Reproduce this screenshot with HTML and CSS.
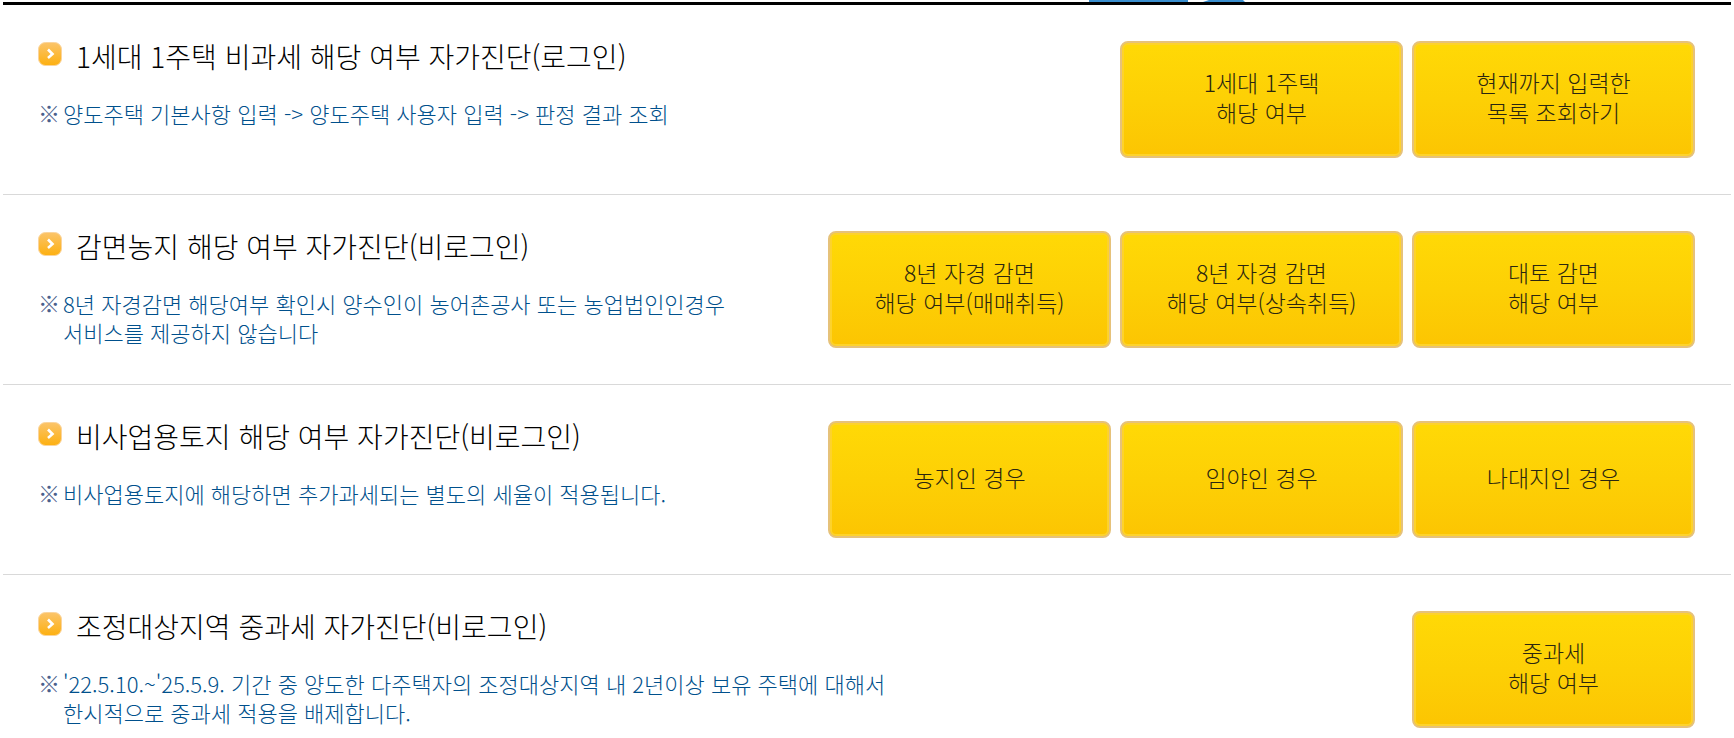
FILE: index.html
```
<!DOCTYPE html>
<html lang="ko">
  <head>
    <meta charset="utf-8" />
    <title>양도소득세 자가진단</title>
    <link rel="stylesheet" href="styles.css">
  </head>

  <body>
    <svg class="symbols" width="0" height="0" aria-hidden="true">
      <defs>
        <linearGradient id="bulletFill" x1="0" y1="0" x2="0" y2="1">
          <stop offset="0" stop-color="#fbc46a" />
          <stop offset="1" stop-color="#fdb010" />
        </linearGradient>
        <symbol id="bullet" viewBox="0 0 24 24">
          <rect x="0.5" y="0.5" width="23" height="23" rx="7" fill="url(#bulletFill)" stroke="#fbd49a" />
          <path d="M10 7.5l4.5 4.5-4.5 4" fill="none" stroke="#fff" stroke-width="2.6" />
        </symbol>
      </defs>
    </svg>

    <div class="topline">
      <svg class="banner" width="156" height="2" aria-hidden="true">
        <rect width="99" height="2" fill="#3a8fcf" />
        <path d="M114 2l6-2h34l2 2z" fill="#3a8fcf" />
      </svg>
    </div>

    <main class="list">
      <section class="row">
        <div class="info">
          <h2 class="title"><svg class="bullet"><use href="#bullet" /></svg>1세대 1주택 비과세 해당 여부 자가진단(로그인)</h2>
          <p class="note"><span class="mark">※</span><span>양도주택 기본사항 입력 -&gt; 양도주택 사용자 입력 -&gt; 판정 결과 조회</span></p>
        </div>
        <div class="buttons">
          <button type="button" class="btn">1세대 1주택<br />해당 여부</button>
          <button type="button" class="btn">현재까지 입력한<br />목록 조회하기</button>
        </div>
      </section>

      <section class="row">
        <div class="info">
          <h2 class="title"><svg class="bullet"><use href="#bullet" /></svg>감면농지 해당 여부 자가진단(비로그인)</h2>
          <p class="note"><span class="mark">※</span><span>8년 자경감면 해당여부 확인시 양수인이 농어촌공사 또는 농업법인인경우<br />서비스를 제공하지 않습니다</span></p>
        </div>
        <div class="buttons">
          <button type="button" class="btn">8년 자경 감면<br />해당 여부(매매취득)</button>
          <button type="button" class="btn">8년 자경 감면<br />해당 여부(상속취득)</button>
          <button type="button" class="btn">대토 감면<br />해당 여부</button>
        </div>
      </section>

      <section class="row">
        <div class="info">
          <h2 class="title"><svg class="bullet"><use href="#bullet" /></svg>비사업용토지 해당 여부 자가진단(비로그인)</h2>
          <p class="note"><span class="mark">※</span><span>비사업용토지에 해당하면 추가과세되는 별도의 세율이 적용됩니다.</span></p>
        </div>
        <div class="buttons">
          <button type="button" class="btn">농지인 경우</button>
          <button type="button" class="btn">임야인 경우</button>
          <button type="button" class="btn">나대지인 경우</button>
        </div>
      </section>

      <section class="row">
        <div class="info">
          <h2 class="title"><svg class="bullet"><use href="#bullet" /></svg>조정대상지역 중과세 자가진단(비로그인)</h2>
          <p class="note"><span class="mark">※</span><span>'22.5.10.~'25.5.9. 기간 중 양도한 다주택자의 조정대상지역 내 2년이상 보유 주택에 대해서<br />한시적으로 중과세 적용을 배제합니다.</span></p>
        </div>
        <div class="buttons">
          <button type="button" class="btn">중과세<br />해당 여부</button>
        </div>
      </section>
    </main>
  </body>
</html>
```
FILE: styles.css
```
* {
  box-sizing: border-box;
}

body {
  margin: 0 3px;
  background: #fff;
  color: #000;
  font-family: "Noto Sans CJK KR", sans-serif;
  font-weight: 300;
}

.symbols {
  position: absolute;
}

.topline {
  display: flex;
  justify-content: flex-end;
  padding-right: 486px;
  border-bottom: 3px solid #000;
}

.banner {
  display: block;
}

.row {
  display: flex;
  justify-content: space-between;
  padding: 36px 36px 36px 35px;
  border-bottom: 1px solid #d9d9d9;
}

.row:last-child {
  padding-bottom: 0;
  border-bottom: 0;
}

.info {
  white-space: nowrap;
}

.title {
  display: flex;
  align-items: center;
  gap: 14px;
  margin: 0 0 28px;
  font-size: 28px;
  font-weight: 300;
  line-height: 30px;
}

.bullet {
  width: 24px;
  height: 24px;
  margin-bottom: 4px;
}

.note {
  display: flex;
  margin: 0;
  color: #00508c;
  font-size: 22px;
  line-height: 29px;
}

.mark {
  width: 25px;
  color: #4a608c;
  line-height: 26px;
}

.buttons {
  display: flex;
  flex: none;
  gap: 9px;
}

.btn {
  width: 283px;
  height: 117px;
  padding: 0 0 5px;
  border: 2px solid #e6c27a;
  border-radius: 8px;
  background: linear-gradient(#ffd906, #fdd005 50%, #fcc502);
  box-shadow: inset 0 0 0 2px #fdd22c;
  color: #2a2610;
  font-family: inherit;
  font-size: 23px;
  font-weight: 300;
  line-height: 30px;
  cursor: pointer;
}
```
